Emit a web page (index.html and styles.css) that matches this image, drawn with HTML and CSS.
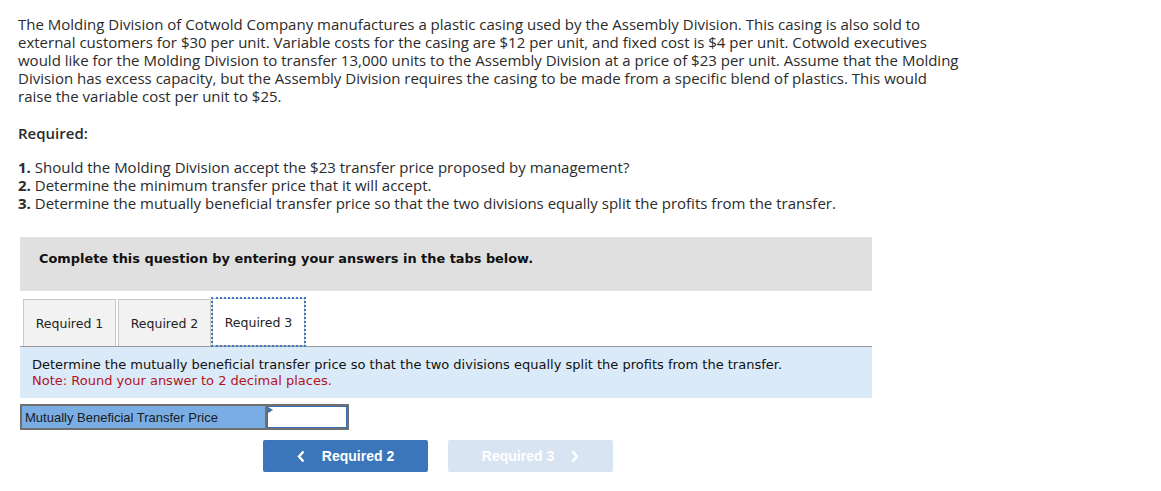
FILE: index.html
```html
<!DOCTYPE html>
<html>
<head>
<meta charset="utf-8">
<link rel="stylesheet" href="styles.css">
</head>
<body>
<div class="page">
  <p class="intro">The Molding Division of Cotwold Company manufactures a plastic casing used by the Assembly Division. This casing is also sold to external customers for $30 per unit. Variable costs for the casing are $12 per unit, and fixed cost is $4 per unit. Cotwold executives would like for the Molding Division to transfer 13,000 units to the Assembly Division at a price of $23 per unit. Assume that the Molding Division has excess capacity, but the Assembly Division requires the casing to be made from a specific blend of plastics. This would raise the variable cost per unit to $25.</p>
  <p class="req-title">Required:</p>
  <ol class="req-list">
    <li><b>1.</b> Should the Molding Division accept the $23 transfer price proposed by management?</li>
    <li><b>2.</b> Determine the minimum transfer price that it will accept.</li>
    <li><b>3.</b> Determine the mutually beneficial transfer price so that the two divisions equally split the profits from the transfer.</li>
  </ol>
  <div class="question">
    <div class="banner">Complete this question by entering your answers in the tabs below.</div>
    <div class="tabs">
      <div class="tab">Required 1</div>
      <div class="tab">Required 2</div>
      <div class="tab active">Required 3</div>
    </div>
    <div class="info">
      <div>Determine the mutually beneficial transfer price so that the two divisions equally split the profits from the transfer.</div>
      <div class="note">Note: Round your answer to 2 decimal places.</div>
    </div>
    <div class="answer-row">
      <div class="label-cell">Mutually Beneficial Transfer Price</div>
      <div class="input-cell"><span class="marker"></span></div>
    </div>
    <div class="nav">
      <div class="btn prev"><svg class="chev left" width="8" height="13" viewBox="0 0 8 13"><polyline points="6.5,1.5 2,6.5 6.5,11.5" fill="none" stroke="#fff" stroke-width="2.4"/></svg>Required 2</div>
      <div class="btn next">Required 3<svg class="chev right" width="8" height="13" viewBox="0 0 8 13"><polyline points="1.5,1.5 6,6.5 1.5,11.5" fill="none" stroke="#fff" stroke-width="2.4"/></svg></div>
    </div>
  </div>
</div>
</body>
</html>
```
FILE: styles.css
```css
html, body {
  margin: 0;
  padding: 0;
  background: #fff;
}
.page {
  padding: 15px 18px 0 18px;
  font-family: "Open Sans", "Liberation Sans", sans-serif;
  font-size: 15px;
  color: #2b2b2b;
}
.intro {
  margin: 0;
  width: 945px;
  line-height: 18px;
}
.req-title {
  margin: 18px 0 0 0;
  font-weight: 600;
  line-height: 18px;
  padding-top: 1px;
}
.req-list {
  list-style: none;
  margin: 16px 0 0 0;
  padding: 0;
  line-height: 18px;
}
.req-list b {
  font-weight: 700;
}
.question {
  margin: 25px 0 0 2px;
  width: 852px;
  font-family: "DejaVu Sans", Verdana, sans-serif;
  font-size: 13px;
}
.banner {
  background: #e0e0e0;
  height: 54px;
  box-sizing: border-box;
  padding: 13px 0 0 19px;
  line-height: 18px;
  font-weight: bold;
  color: #111;
  font-size: 12.9px;
}
.tabs {
  display: flex;
  margin-top: 7px;
  padding-left: 3px;
  gap: 2px;
  align-items: flex-end;
}
.tab {
  width: 91px;
  height: 46px;
  background: #f2f2f2;
  border: 1px solid #c8c8c8;
  border-bottom: none;
  display: flex;
  align-items: center;
  justify-content: center;
  color: #222;
  font-size: 12.5px;
}
.tab.active {
  background: #fff;
  height: 46px;
  margin-left: -1px;
  border: 1px solid #c8c8c8;
  outline: 2px dotted #3d78c0;
  outline-offset: -1px;
}
.info {
  background: #daeaf8;
  border-top: 1px solid #9a9a9a;
  padding: 10px 12px 9px 12px;
  line-height: 16px;
  color: #111;
}
.note {
  color: #b3131b;
}
.answer-row {
  display: flex;
  margin-top: 6px;
  height: 26px;
}
.label-cell {
  width: 245px;
  background: #7aade3;
  border: 2px solid #707070;
  border-right: none;
  font-family: "Liberation Sans", Arial, sans-serif;
  font-size: 13px;
  color: #1a1a1a;
  display: flex;
  align-items: center;
  padding-left: 3px;
  box-sizing: border-box;
}
.input-cell {
  position: relative;
  width: 84px;
  box-sizing: border-box;
  border: 2px solid #707070;
  background: #fff;
  box-shadow: inset 0 0 0 1px #3a6fb0;
}
.marker {
  position: absolute;
  left: 1px;
  top: 1px;
  width: 0;
  height: 0;
  border-top: 3px solid transparent;
  border-bottom: 3px solid transparent;
  border-left: 5px solid #3a6fb0;
}
.nav {
  display: flex;
  gap: 20px;
  margin-top: 10px;
  padding-left: 243px;
}
.btn {
  width: 165px;
  height: 32px;
  border-radius: 2px;
  display: flex;
  align-items: center;
  justify-content: center;
  font-family: "Liberation Sans", Arial, sans-serif;
  font-weight: bold;
  font-size: 14px;
  color: #fff;
}
.btn.prev {
  background: #3a76b9;
}
.btn.next {
  background: #d8e4f1;
}
.chev {
  display: block;
}
.chev.left {
  margin-right: 17px;
}
.chev.right {
  margin-left: 17px;
}
```
